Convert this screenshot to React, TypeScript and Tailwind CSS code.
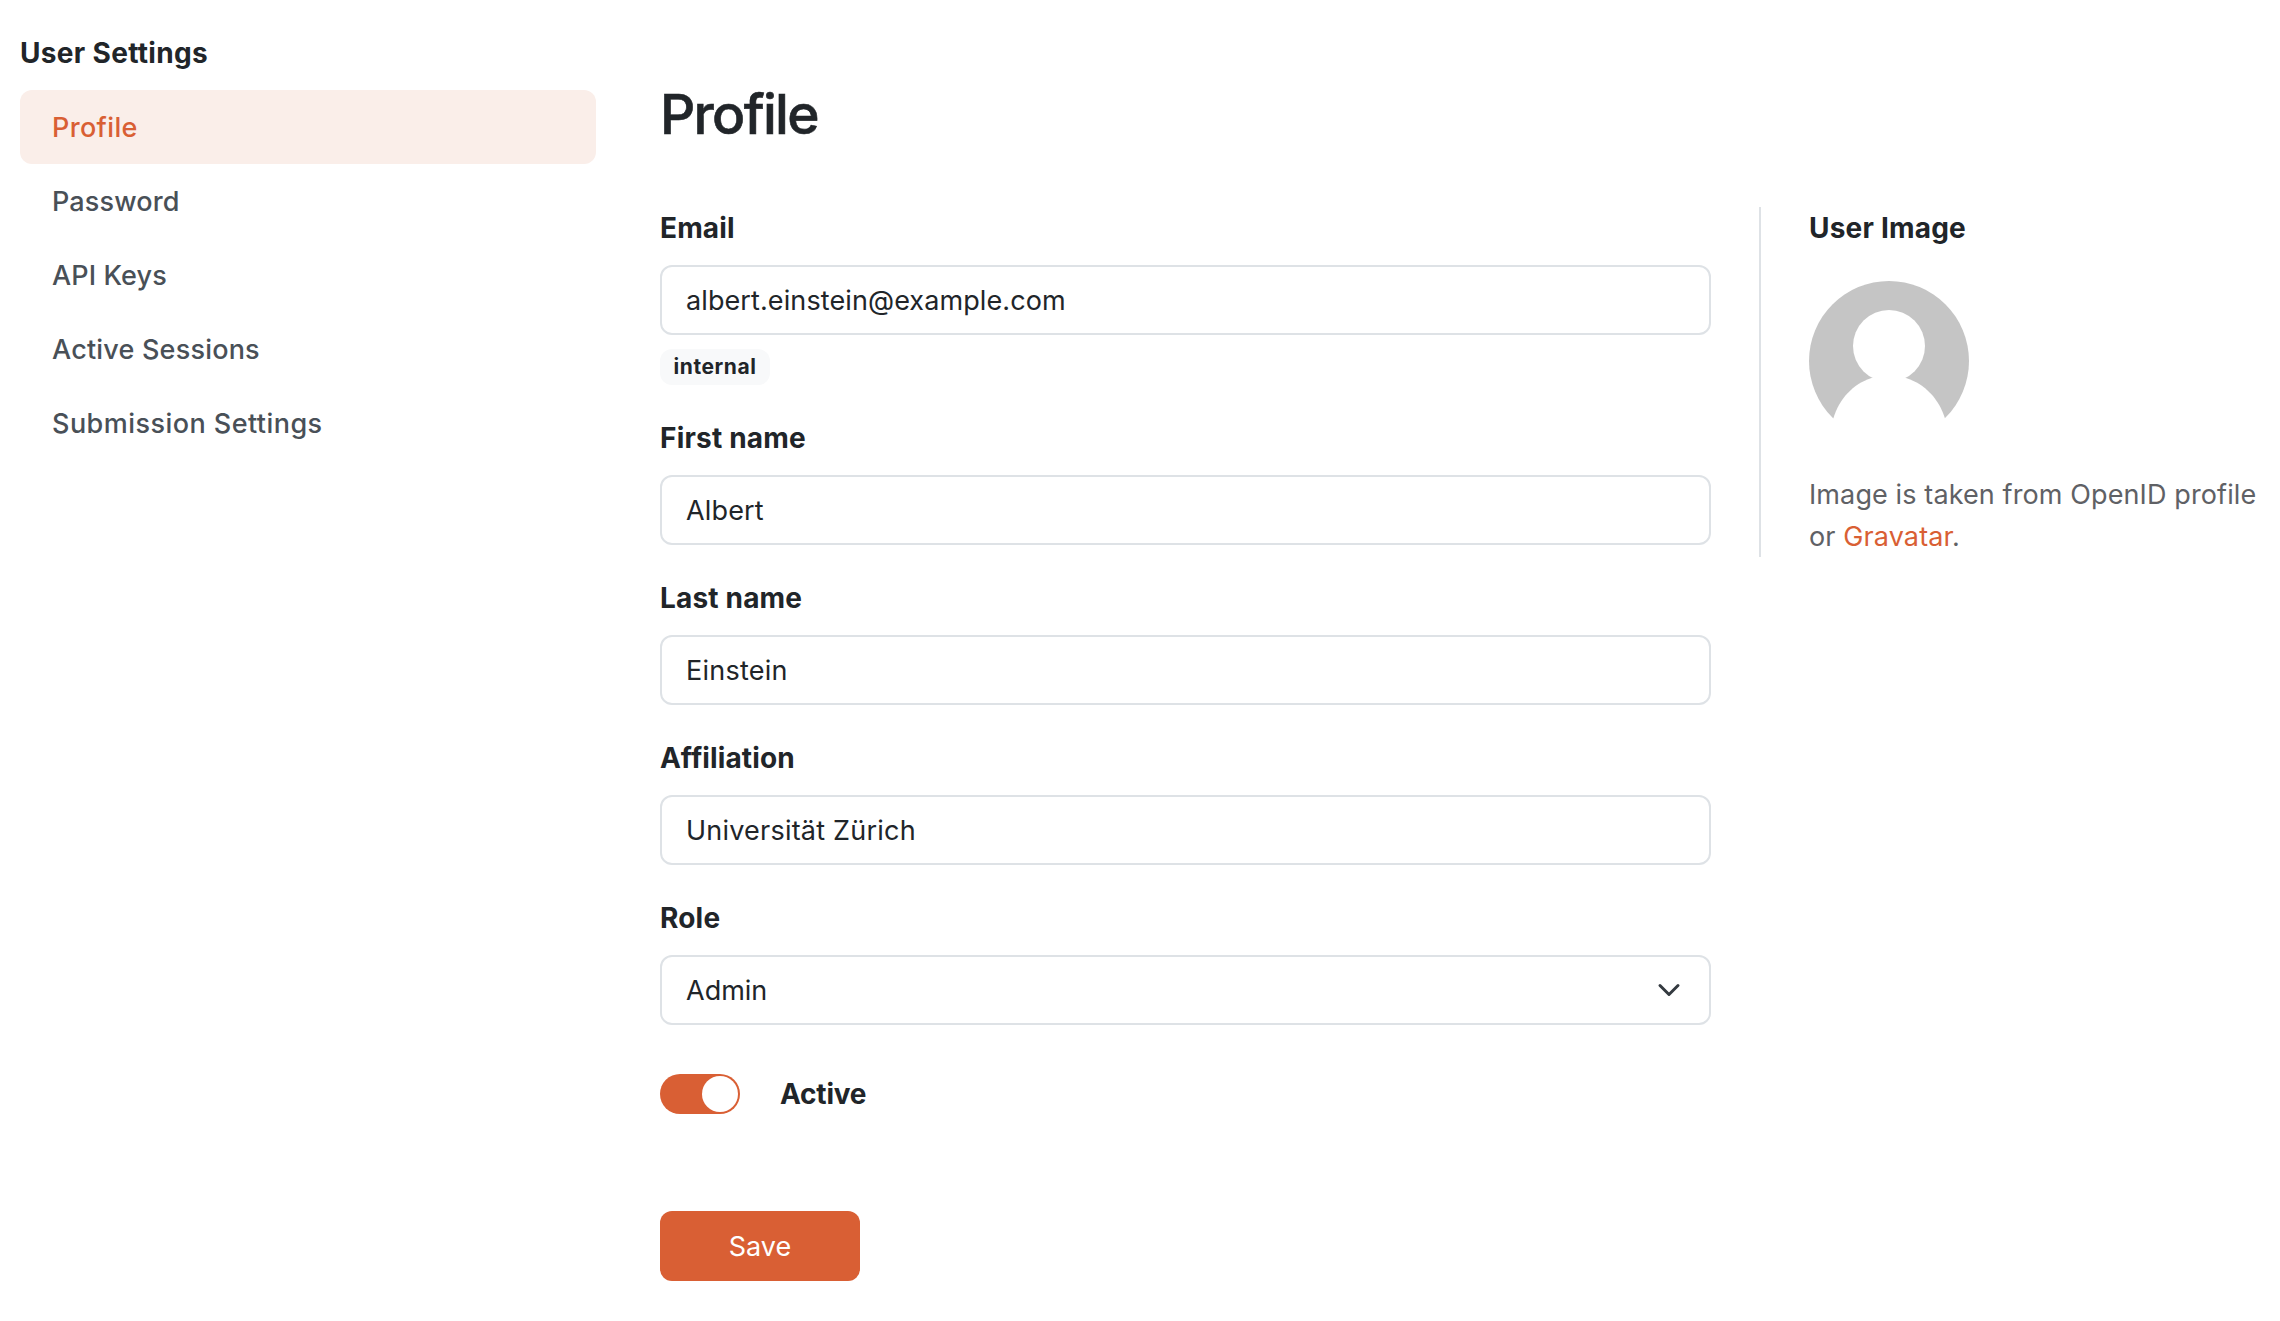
type NavItem = { label: string; tracking: string; active?: boolean };

const navItems: NavItem[] = [
  { label: "Profile", tracking: "tracking-[0.35px]", active: true },
  { label: "Password", tracking: "tracking-[0.15px]" },
  { label: "API Keys", tracking: "tracking-[0.12px]" },
  { label: "Active Sessions", tracking: "tracking-[0.2px]" },
  { label: "Submission Settings", tracking: "tracking-[0.45px]" },
];

const labelClass = "block text-[28px] leading-[42px] font-bold";
const fieldClass =
  "mt-4 flex h-[70px] w-full items-center rounded-xl border-2 border-[#dee2e6] bg-white px-6 text-[27px] leading-[42px] outline-none";

function TextField({
  id,
  label,
  value,
  tracking,
  labelTracking,
}: {
  id: string;
  label: string;
  value: string;
  tracking: string;
  labelTracking: string;
}) {
  return (
    <div>
      <label htmlFor={id} className={`${labelClass} ${labelTracking}`}>
        {label}
      </label>
      <input id={id} type="text" defaultValue={value} className={`${fieldClass} ${tracking}`} />
    </div>
  );
}

function Sidebar() {
  return (
    <nav className="w-[576px] shrink-0">
      <h2 className="pt-8 text-[28px] leading-[42px] font-bold tracking-[0.32px]">User Settings</h2>
      <ul className="mt-4">
        {navItems.map(({ label, tracking, active }) => (
          <li key={label}>
            <a
              href="#"
              className={`flex h-[74px] items-center rounded-xl px-8 pt-0.5 text-[27px] font-medium ${tracking} ${
                active ? "bg-[#faeee9] text-[#d95f34]" : "text-[#495057]"
              }`}
            >
              {label}
            </a>
          </li>
        ))}
      </ul>
    </nav>
  );
}

function Avatar() {
  return (
    <svg viewBox="0 0 160 160" className="mt-8 block size-40" role="img" aria-label="User image">
      <circle cx="80" cy="80" r="80" fill="#c5c5c5" />
      <circle cx="80" cy="65" r="36" fill="#fff" />
      <path
        d="M62.5 97 C44 103 30 118 24.3 137.5 L24.3 160 H136 V137.5 C130 118 116 103 97 97 Z"
        fill="#fff"
      />
    </svg>
  );
}

export default function App() {
  return (
    <div className="flex min-h-screen bg-white pl-5 font-[Inter,sans-serif] text-[#212529]">
      <Sidebar />

      <main className="ml-16 flex-1">
        <h1 className="pt-[81px] text-[55px] leading-[66px] font-medium tracking-[-1.7px] [-webkit-text-stroke:0.6px_#212529]">
          Profile
        </h1>

        <div className="mt-[60px] flex items-start">
          <form className="flex w-[1051px] shrink-0 flex-col gap-8">
            <div>
              <TextField
                id="email"
                label="Email"
                value="albert.einstein@example.com"
                tracking="tracking-[0.1px]"
                labelTracking="tracking-[0.15px]"
              />
              <span className="mt-3.5 flex h-9 w-[110px] items-center justify-center rounded-xl bg-[#f8f9fa] pb-0.5 text-[21px] leading-none font-bold tracking-[0.55px]">
                internal
              </span>
            </div>
            <TextField
              id="first-name"
              label="First name"
              value="Albert"
              tracking="tracking-[0.15px]"
              labelTracking="tracking-[0.2px]"
            />
            <TextField
              id="last-name"
              label="Last name"
              value="Einstein"
              tracking="tracking-[0.25px]"
              labelTracking="tracking-[0.18px]"
            />
            <TextField
              id="affiliation"
              label="Affiliation"
              value="Universität Zürich"
              tracking="tracking-[0.22px]"
              labelTracking="tracking-[0.12px]"
            />
            <div>
              <span className={`${labelClass} tracking-[0.2px]`}>Role</span>
              <button type="button" className={`${fieldClass} justify-between`}>
                <span className="pt-0.5">Admin</span>
                <svg viewBox="0 0 16 16" className="mr-1 size-6" fill="none">
                  <path
                    d="m2 5 6 6 6-6"
                    stroke="#343a40"
                    strokeWidth="2"
                    strokeLinecap="round"
                    strokeLinejoin="round"
                  />
                </svg>
              </button>
            </div>

            <label className="mt-4 flex h-[42px] items-center gap-10">
              <span className="flex h-10 w-20 items-center justify-end rounded-full bg-[#d95f34] pr-0.5">
                <span className="size-9 rounded-full bg-white" />
              </span>
              <span className="text-[28px] leading-[42px] font-bold tracking-[-0.2px]">Active</span>
            </label>

            <button
              type="button"
              className="mt-16 h-[70px] w-[200px] rounded-xl bg-[#d95f34] pt-0.5 text-[27px] text-white"
            >
              Save
            </button>
          </form>

          <aside className="ml-12 h-[350px] w-[521px] shrink-0 border-l-2 border-[#dee2e6] pl-12">
            <h2 className={`${labelClass} tracking-[0.2px]`}>User Image</h2>
            <Avatar />
            <p className="mt-[33px] text-[27px] leading-[42px] tracking-[0.11px] text-[#5f6165]">
              <span className="block">Image is taken from OpenID profile</span>
              or{" "}
              <a href="#" className="text-[#d95f34]">
                Gravatar
              </a>
              .
            </p>
          </aside>
        </div>
      </main>
    </div>
  );
}
